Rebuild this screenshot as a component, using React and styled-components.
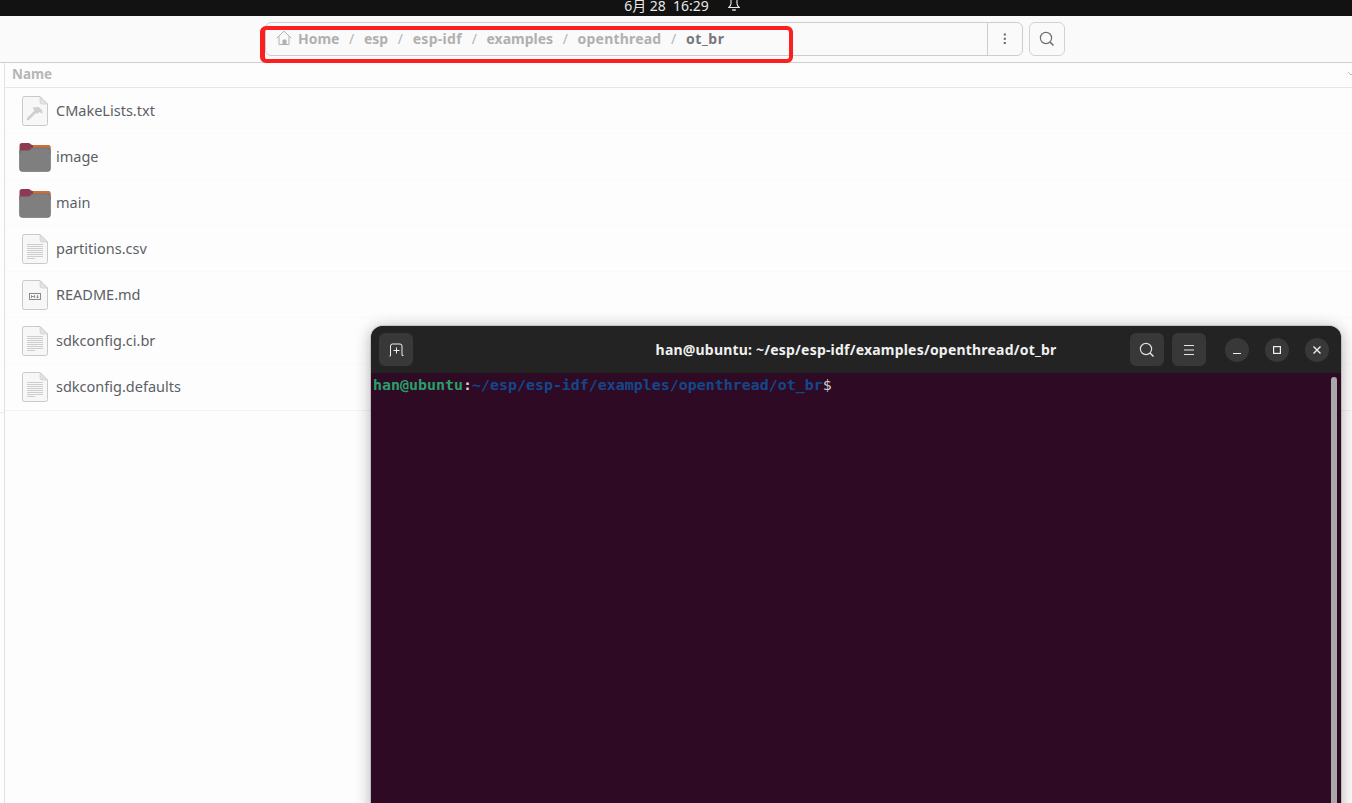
import React from 'react'
import styled, { createGlobalStyle } from 'styled-components'

const Global = createGlobalStyle`
  html, body { margin: 0; padding: 0; background: #fdfdfd; overflow: hidden; }
  * { box-sizing: border-box; }
`

const Screen = styled.div`
  position: relative;
  width: 1352px;
  height: 803px;
  overflow: hidden;
  display: flex;
  flex-direction: column;
  background: #fdfdfd;
  font-family: "Noto Sans", sans-serif;
`

const TopBar = styled.div`
  flex: 0 0 16px;
  height: 16px;
  background: #121212;
  color: #e8e8e8;
  display: flex;
  justify-content: center;
  align-items: flex-start;
  gap: 19px;
  padding-left: 12px;
  font-size: 14px;
  overflow: hidden;
`

const Clock = styled.span`
  display: block;
  line-height: 12px;
  white-space: pre;
  font-family: "Noto Sans", "Noto Sans CJK SC", sans-serif;
`

const Bell = styled.svg`
  width: 12px;
  height: 11px;
`

const HeaderBar = styled.header`
  flex: 0 0 47px;
  height: 47px;
  background: #fafafa;
  border-bottom: 1px solid #cfcfcf;
  padding: 6px 0 0 265px;
  display: flex;
  align-items: flex-start;
  gap: 6px;
`

const PathBar = styled.div`
  width: 758px;
  height: 34px;
  border: 1px solid #cdcdcd;
  border-radius: 6px;
  display: flex;
  align-items: center;
`

const Crumbs = styled.div`
  flex: 1;
  height: 100%;
  display: flex;
  align-items: center;
  padding: 0 0 2px 10px;
  border-right: 1px solid #cdcdcd;
`

const Crumb = styled.span`
  font-size: 14px;
  font-weight: 700;
  color: ${(props) => (props.$current ? '#77777a' : '#b0b0b0')};
  letter-spacing: ${(props) => props.$track || 0}px;
`

const Slash = styled.span`
  font-size: 14px;
  color: #b4b4b4;
  width: 24.5px;
  text-align: center;
`

const MenuBtn = styled.div`
  flex: 0 0 34px;
  display: flex;
  align-items: center;
  justify-content: center;
`

const SearchBtn = styled.div`
  width: 36px;
  height: 34px;
  border: 1px solid #d2d2d2;
  border-radius: 6px;
  display: flex;
  align-items: center;
  justify-content: center;
`

const Body = styled.div`
  flex: 1;
  display: flex;
`

const Rail = styled.div`
  flex: 0 0 5px;
  border-right: 1px solid #e2e2e2;
  background: linear-gradient(#ececec, #ececec) 0 349px / 100% 1px no-repeat;
`

const Listing = styled.main`
  flex: 1;
  display: flex;
  flex-direction: column;
`

const ColumnHead = styled.div`
  height: 25px;
  padding: 0 0 2px 7px;
  border-bottom: 1px solid #e6e6e6;
  font-size: 13.4px;
  font-weight: 700;
  color: #b6b6b6;
  display: flex;
  align-items: center;
  justify-content: space-between;
`

const SortArrow = styled.svg`
  width: 8px;
  height: 6px;
  margin-right: -3px;
`

const Row = styled.div`
  height: 46px;
  display: flex;
  align-items: center;
  gap: 5px;
  padding-left: 14px;
  border-bottom: 1px solid #fafafa;
  &:last-child { border-bottom: 1px solid #f2f2f2; height: 47px; }
`

const IconSlot = styled.div`
  flex: 0 0 32px;
  display: flex;
  align-items: center;
  justify-content: center;
`

const FileName = styled.span`
  font-size: 14.5px;
  color: #5c5f66;
  padding-bottom: 2px;
`

const Terminal = styled.section`
  position: absolute;
  left: 371px;
  top: 326px;
  width: 970px;
  height: 490px;
  border-radius: 12px 12px 0 0;
  background: #2f0a24;
  box-shadow: 0 0 0 1px rgba(0, 0, 0, 0.12), 0 2px 16px rgba(0, 0, 0, 0.32);
  overflow: hidden;
  display: flex;
  flex-direction: column;
`

const TermHead = styled.div`
  position: relative;
  flex: 0 0 47px;
  height: 47px;
  background: #232323;
  display: flex;
  align-items: center;
  padding: 0 12px 0 8px;
`

const TermTitle = styled.div`
  position: absolute;
  left: 0;
  right: 0;
  top: 14px;
  text-align: center;
  font-size: 14px;
  font-weight: 700;
  letter-spacing: 0.2px;
  color: #f0f0f0;
  line-height: 19px;
`

const HeadBtn = styled.div`
  width: 34px;
  height: 33px;
  background: #383838;
  border-radius: 6px;
  display: flex;
  align-items: center;
  justify-content: center;
  margin-right: ${(props) => props.$gap || 0}px;
`

const Spacer = styled.div`
  flex: 1;
`

const WinBtn = styled.div`
  width: 24px;
  height: 24px;
  border-radius: 50%;
  background: #383838;
  display: flex;
  align-items: center;
  justify-content: center;
  margin-left: ${(props) => props.$gap || 0}px;
`

const TermBody = styled.div`
  position: relative;
  flex: 1;
  padding: 3px 0 0 2px;
  font-family: "DejaVu Sans Mono", monospace;
  font-size: 14.95px;
  line-height: 18px;
  font-weight: 700;
  white-space: pre;
`

const Prompt = styled.span`
  color: ${(props) => props.$color};
  font-weight: ${(props) => props.$weight || 700};
`

const Scrollbar = styled.div`
  position: absolute;
  right: 4px;
  top: 4px;
  bottom: 0;
  width: 6px;
  border-radius: 3px 3px 0 0;
  background: #a8a8a8;
`

const Highlight = styled.div`
  position: absolute;
  left: 260px;
  top: 26px;
  width: 533px;
  height: 37px;
  border: 4px solid #fb1f1f;
  border-left-width: 5px;
  border-radius: 6px;
  pointer-events: none;
`

const HomeIcon = () => (
  <svg width="16" height="16" viewBox="0 0 16 16" fill="none" stroke="#b0b0b0" strokeWidth="1" style={{ marginRight: 6 }}>
    <path d="M0.8 8 L8 1.2 L15.2 8" />
    <path d="M3 6.5 V14.5 H13 V6.5" />
    <path d="M7 14.5 V10 H10 V14.5" fill="#b0b0b0" />
  </svg>
)

const PageBase = ({ children }) => (
  <svg width="26" height="30" viewBox="0 0 26 30">
    <path d="M2.5 0.5 H18 L25.5 8 V27.5 a2 2 0 0 1 -2 2 H2.5 a2 2 0 0 1 -2 -2 V2.5 a2 2 0 0 1 2 -2 Z" fill="#f7f7f7" stroke="#c9c9c9" />
    <path d="M18 0.5 V6 a2 2 0 0 0 2 2 H25.5 Z" fill="#e2e2e2" stroke="#c9c9c9" strokeWidth="0.6" />
    {children}
  </svg>
)

const TextLines = () => (
  <g stroke="#cdcdcd" strokeWidth="1">
    <path d="M5 10.5 H21 M5 12.5 H21 M5 14.5 H21 M5 16.5 H21 M5 18.5 H21 M5 20.5 H21 M5 22.5 H21" />
    <path d="M5 24.5 H13" />
  </g>
)

const TextFile = () => <PageBase><TextLines /></PageBase>

const MakeFile = () => (
  <PageBase>
    <path d="M6 23 L14 15" stroke="#cfcfcf" strokeWidth="2.6" strokeLinecap="round" />
    <path d="M10.5 11.5 L16.5 11 L20 14 L20.5 18 L17.5 16 L15 18 L12.5 14.5 Z" fill="#cfcfcf" />
  </PageBase>
)

const MdFile = () => (
  <PageBase>
    <rect x="7.5" y="13.5" width="11" height="6" fill="none" stroke="#8a8a8a" />
    <path d="M9.5 18 V15.5 L11 17 L12.5 15.5 V18 M15.5 15 V18 M14.3 16.8 L15.5 18 L16.7 16.8" fill="none" stroke="#666" strokeWidth="0.7" />
  </PageBase>
)

const Folder = () => (
  <svg width="32" height="30" viewBox="0 0 32 30">
    <path d="M0.5 3.5 a2.5 2.5 0 0 1 2.5 -2.5 H10 L13 3 H29 a2.5 2.5 0 0 1 2.5 2.5 V12 H0.5 Z" fill="#8e3a52" />
    <path d="M14 3 H29 a2.5 2.5 0 0 1 2.5 2.5 V6 H14 Z" fill="#c9713e" />
    <path d="M0.5 8.5 H10 L13 6 H29 a2.5 2.5 0 0 1 2.5 2.5 V26.5 a3 3 0 0 1 -3 3 H3.5 a3 3 0 0 1 -3 -3 Z" fill="#7f7f7f" stroke="#6c6c6c" strokeWidth="0.6" />
  </svg>
)

const files = [
  { name: 'CMakeLists.txt', icon: <MakeFile /> },
  { name: 'image', icon: <Folder /> },
  { name: 'main', icon: <Folder /> },
  { name: 'partitions.csv', icon: <TextFile /> },
  { name: 'README.md', icon: <MdFile /> },
  { name: 'sdkconfig.ci.br', icon: <TextFile /> },
  { name: 'sdkconfig.defaults', icon: <TextFile /> },
]

const crumbs = [
  { name: 'esp' },
  { name: 'esp-idf', track: 0.3 },
  { name: 'examples' },
  { name: 'openthread', track: 0.2 },
]

export default function App() {
  return (
    <Screen>
      <Global />
      <TopBar>
        <Clock>6月 28  16:29</Clock>
        <Bell viewBox="0 0 12 11" fill="none" stroke="#e8e8e8" strokeWidth="1.1">
          <path d="M3 -1 V3.5 C3 5.5 2 6.5 0.8 7.5 H11.2 C10 6.5 9 5.5 9 3.5 V-1" />
          <path d="M4.2 10 H7.8" strokeWidth="1.4" />
        </Bell>
      </TopBar>
      <HeaderBar>
        <PathBar>
          <Crumbs>
            <HomeIcon />
            <Crumb>Home</Crumb>
            {crumbs.map((c) => (
              <React.Fragment key={c.name}>
                <Slash>/</Slash>
                <Crumb $track={c.track}>{c.name}</Crumb>
              </React.Fragment>
            ))}
            <Slash>/</Slash>
            <Crumb $current $track={0.6}>ot_br</Crumb>
          </Crumbs>
          <MenuBtn>
            <svg width="4" height="12" viewBox="0 0 4 12" fill="#666">
              <rect x="0.8" y="0.5" width="2" height="2" />
              <rect x="0.8" y="4.8" width="2" height="2" />
              <rect x="0.8" y="9" width="2" height="2" />
            </svg>
          </MenuBtn>
        </PathBar>
        <SearchBtn>
          <svg width="16" height="16" viewBox="0 0 16 16" fill="none" stroke="#6e6e6e" strokeWidth="1.2">
            <circle cx="7" cy="7" r="5.6" />
            <path d="M11 11 L14.5 14.5" strokeWidth="1.6" />
          </svg>
        </SearchBtn>
      </HeaderBar>
      <Body>
        <Rail />
        <Listing>
          <ColumnHead>
            Name
            <SortArrow viewBox="0 0 8 6" fill="none" stroke="#b6b6b6">
              <path d="M1 1 L4 4 L7 1" />
            </SortArrow>
          </ColumnHead>
          {files.map((f) => (
            <Row key={f.name}>
              <IconSlot>{f.icon}</IconSlot>
              <FileName>{f.name}</FileName>
            </Row>
          ))}
        </Listing>
      </Body>
      <Highlight />
      <Terminal>
        <TermHead>
          <HeadBtn>
            <svg width="15" height="14" viewBox="0 0 15 14" fill="none" stroke="#eee" strokeWidth="1">
              <path d="M0.5 13 H1.5 V3 a2 2 0 0 1 2 -2 H11 a2 2 0 0 1 2 2 V12.5 H14.5" />
              <path d="M7.5 4.5 V10.5 M4.5 7.5 H10.5" />
            </svg>
          </HeadBtn>
          <TermTitle>han@ubuntu: ~/esp/esp-idf/examples/openthread/ot_br</TermTitle>
          <Spacer />
          <HeadBtn $gap={8}>
            <svg width="16" height="16" viewBox="0 0 16 16" fill="none" stroke="#ddd" strokeWidth="1.2">
              <circle cx="7" cy="7" r="5.6" />
              <path d="M11 11 L14.5 14.5" strokeWidth="1.6" />
            </svg>
          </HeadBtn>
          <HeadBtn $gap={19}>
            <svg width="12" height="10" viewBox="0 0 12 10" stroke="#e6e6e6" strokeWidth="1">
              <path d="M1 0.5 H11 M1 5 H11 M1 9.5 H11" />
            </svg>
          </HeadBtn>
          <WinBtn>
            <svg width="10" height="10" viewBox="0 0 10 10" stroke="#eee" strokeWidth="1.2">
              <path d="M1 8.5 H9" />
            </svg>
          </WinBtn>
          <WinBtn $gap={16}>
            <svg width="10" height="10" viewBox="0 0 10 10" fill="none" stroke="#eee" strokeWidth="1.2">
              <rect x="1.6" y="1.6" width="6.8" height="6.8" />
            </svg>
          </WinBtn>
          <WinBtn $gap={16}>
            <svg width="10" height="10" viewBox="0 0 10 10" stroke="#eee" strokeWidth="1.4">
              <path d="M1.5 1.5 L8.5 8.5 M8.5 1.5 L1.5 8.5" />
            </svg>
          </WinBtn>
        </TermHead>
        <TermBody>
          <Prompt $color="#26a269">han@ubuntu</Prompt>
          <Prompt $color="#d0cfcc">:</Prompt>
          <Prompt $color="#12488b">~/esp/esp-idf/examples/openthread/ot_br</Prompt>
          <Prompt $color="#d0cfcc" $weight={400}>$</Prompt>
          <Scrollbar />
        </TermBody>
      </Terminal>
    </Screen>
  )
}
